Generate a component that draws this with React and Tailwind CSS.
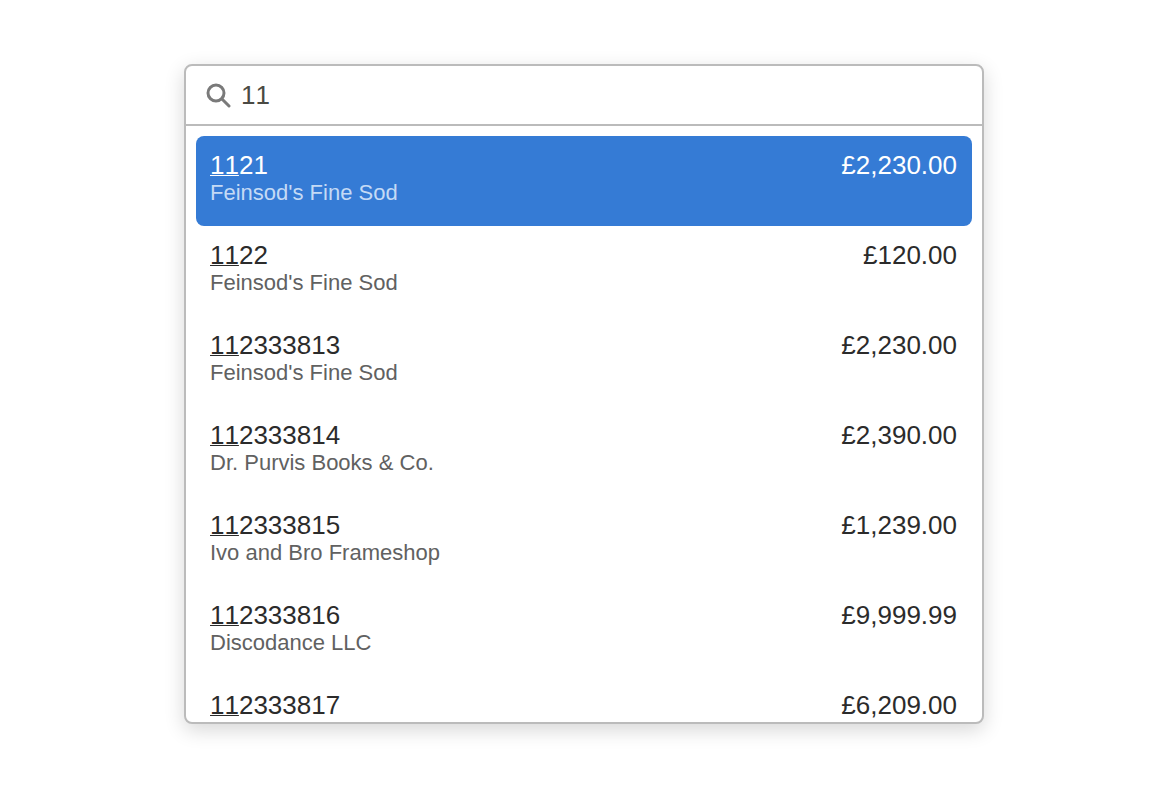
import React from "react";

const items = [
  { rest: "21", name: "Feinsod's Fine Sod", amount: "£2,230.00", active: true },
  { rest: "22", name: "Feinsod's Fine Sod", amount: "£120.00" },
  { rest: "2333813", name: "Feinsod's Fine Sod", amount: "£2,230.00" },
  { rest: "2333814", name: "Dr. Purvis Books & Co.", amount: "£2,390.00" },
  { rest: "2333815", name: "Ivo and Bro Frameshop", amount: "£1,239.00" },
  { rest: "2333816", name: "Discodance LLC", amount: "£9,999.99" },
  { rest: "2333817", name: "", amount: "£6,209.00" },
];

const Item = ({ rest, name, amount, active }) => (
  <div
    className={`flex h-[90px] shrink-0 justify-between rounded-[8px] pt-[14px] pl-[14px] pr-[15px] ${
      active ? "bg-[#357bd5] text-white" : "text-[#2b2b2b]"
    }`}
  >
    <div>
      <div className="text-[26px] leading-[30px] [font-kerning:none]">
        <span className="underline decoration-[1px] underline-offset-[1px] [text-decoration-skip-ink:none]">11</span>
        {rest}
      </div>
      <div className={`mt-[1px] text-[22px] leading-[24px] ${active ? "text-[#c4daf5]" : "text-[#616161]"}`}>{name}</div>
    </div>
    <div className="text-[26px] leading-[30px]">{amount}</div>
  </div>
);

const App = () => {
  return (
    <div className="flex h-[796px] w-full justify-center bg-white pt-[64px] pl-[8px] font-['Liberation_Sans',Arial,sans-serif]">
      <div className="flex h-[660px] w-[800px] flex-col overflow-hidden rounded-[8px] border-2 border-[#bbbbbb] bg-white shadow-[0_6px_20px_rgba(0,0,0,0.16)]">
        {/* Search box */}
        <div className="flex h-[60px] shrink-0 items-center gap-[10px] border-b-2 border-[#bbbbbb] pl-[20px]">
          <svg width="25" height="25" viewBox="0 0 25 25" fill="none" stroke="#7a7a7a" strokeWidth="3">
            <circle cx="10" cy="10" r="8" />
            <path d="M16 16 L23 23" strokeLinecap="round" />
          </svg>
          <span className="text-[26px] text-[#4a4a44] [font-kerning:none]">11</span>
        </div>

        {/* Results */}
        <div className="flex flex-1 flex-col overflow-hidden px-[10px] pt-[10px]">
          {items.map((item) => (
            <Item key={item.rest} {...item} />
          ))}
        </div>
      </div>
    </div>
  );
};

export default App;
